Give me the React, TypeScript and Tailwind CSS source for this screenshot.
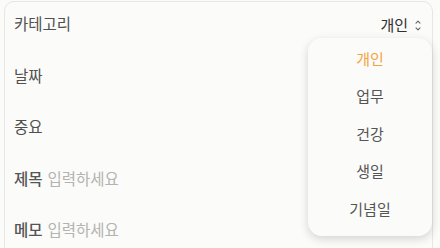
import React from "react";

const font = { fontFamily: '"Noto Sans CJK KR", "Noto Sans", sans-serif' };

function UpDown() {
  return (
    <svg width="8" height="11" viewBox="0 0 8 11" fill="none" stroke="#666" strokeWidth="1.1" strokeLinecap="round" strokeLinejoin="round">
      <path d="M2 3.2 L4 1.2 L6 3.2" />
      <path d="M2 7.8 L4 9.8 L6 7.8" />
    </svg>
  );
}

export default function App() {
  const rows = ["날짜", "중요"];
  const items = ["개인", "업무", "건강", "생일", "기념일"];
  return (
    <div className="relative w-[440px] h-[248px] overflow-hidden bg-[#fbfbf9]" style={font}>
      <div className="ml-[4px] mt-[1px] w-[429px] h-[260px] rounded-[10px] border border-[#e6e6e3] bg-[#fbfbf9] pt-[11px] pl-[9px] pr-[10px] flex flex-col gap-[31.5px]">
        <div className="flex items-center justify-between h-[20px] text-[15.5px] leading-[20px] text-[#505050]">
          <span>카테고리</span>
          <span className="flex items-center gap-[6px] text-[#303030] pt-[4px] text-[15px]">
            개인
            <UpDown />
          </span>
        </div>
        {rows.map((r) => (
          <div key={r} className="h-[20px] text-[15.5px] leading-[20px] text-[#505050]">
            {r}
          </div>
        ))}
        <div className="h-[20px] text-[15.5px] leading-[20px] flex gap-[5px]">
          <span className="text-[#555] font-medium">제목</span>
          <span className="text-[#b3b3b0]">입력하세요</span>
        </div>
        <div className="h-[20px] text-[15.5px] leading-[20px] flex gap-[5px]">
          <span className="text-[#555] font-medium">메모</span>
          <span className="text-[#b3b3b0]">입력하세요</span>
        </div>
      </div>
      <div className="absolute left-[308px] top-[38px] w-[124px] h-[198px] rounded-[14px] bg-[#fbfbf9] shadow-[0_3px_10px_rgba(0,0,0,0.16)] py-[2px] flex flex-col">
        {items.map((it, i) => (
          <div
            key={it}
            className={
              "h-[37.5px] flex items-center justify-center text-[15px] " +
              (i === 0 ? "text-[#f2a444]" : "text-[#555]")
            }
          >
            {it}
          </div>
        ))}
      </div>
    </div>
  );
}
